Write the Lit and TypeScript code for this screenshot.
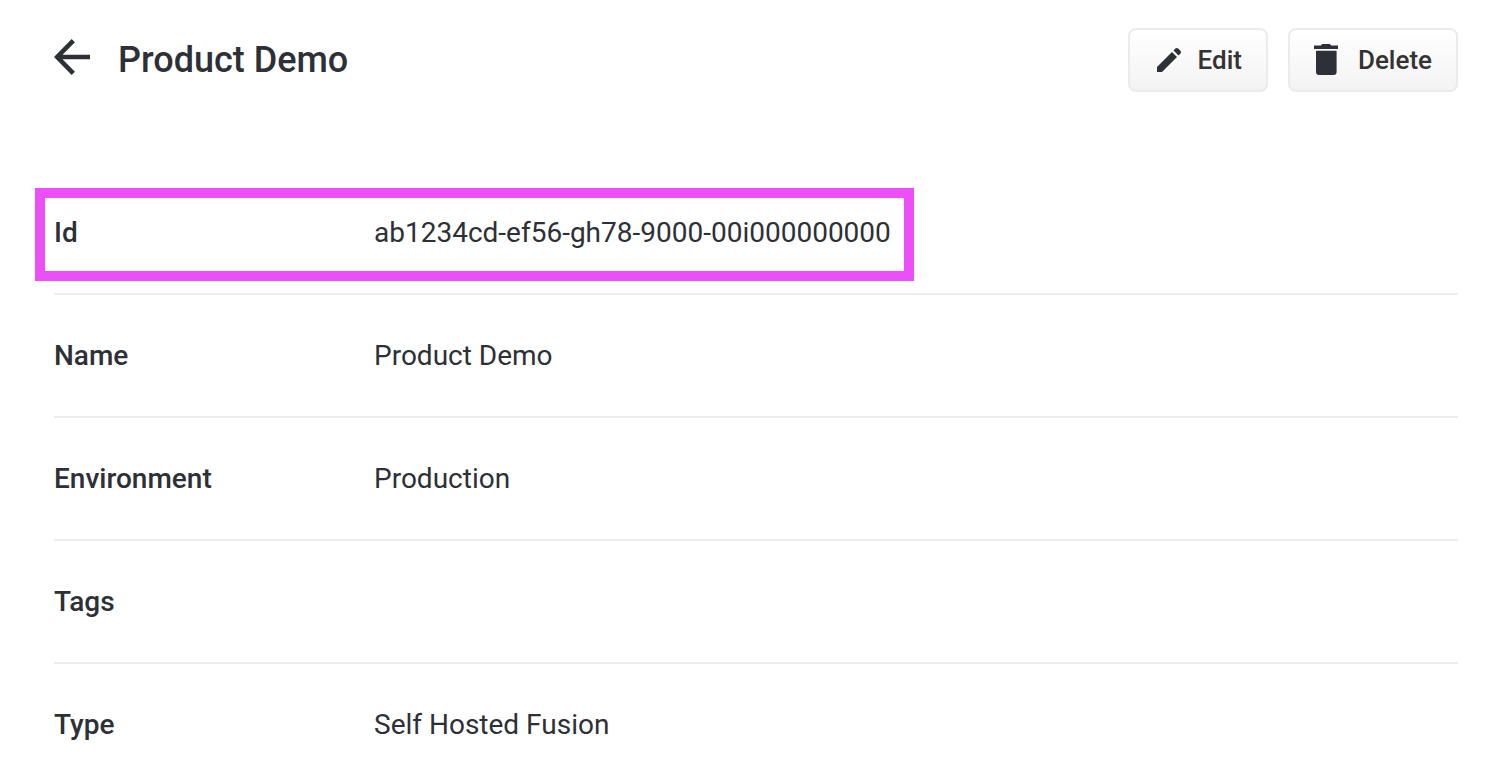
import { LitElement, html, css, svg, nothing } from "lit";
import { customElement } from "lit/decorators.js";

interface Field {
  label: string;
  value: string;
  marked?: boolean;
}

const fields: Field[] = [
  { label: "Id", value: "ab1234cd-ef56-gh78-9000-00i000000000", marked: true },
  { label: "Name", value: "Product Demo" },
  { label: "Environment", value: "Production" },
  { label: "Tags", value: "" },
  { label: "Type", value: "Self Hosted Fusion" },
];

const pencil = svg`
  <path d="M3 23 18 8 23 13 8 28H3Z" />
  <path d="M19.5 6.5 21.4 4.6a2 2 0 0 1 2.8 0L26.4 6.8a2 2 0 0 1 0 2.8L24.5 11.5Z" />`;

const trash = svg`
  <path d="M0 1.5H6.8L8.3 0H15.7L17.2 1.5H24V5H0Z" />
  <path d="M2 6.7H22.6V27.8a3.2 3.2 0 0 1-3.2 3.2H5.2A3.2 3.2 0 0 1 2 27.8Z" />`;

@customElement("app-root")
export class AppRoot extends LitElement {
  static styles = css`
    :host {
      display: block;
      height: 100vh;
      overflow: hidden;
      background: #fff;
      color: #2d3036;
      font-family: Roboto, "Liberation Sans", sans-serif;
      font-size: 28px;
      line-height: 41px;
    }
    .page {
      padding: 28px 44px 0 54px;
    }
    .header {
      display: flex;
      align-items: center;
      gap: 28px;
      margin-bottom: 80px;
    }
    .back {
      display: flex;
      padding: 0 0 6px;
      border: 0;
      background: none;
      color: inherit;
    }
    .title {
      flex: 1;
      margin: 0;
      font-size: 36px;
      font-weight: 500;
      line-height: 44px;
    }
    .actions {
      display: flex;
      gap: 20px;
    }
    .action {
      display: flex;
      align-items: center;
      gap: 16px;
      height: 64px;
      padding: 0 24px;
      border: 2px solid #ebebeb;
      border-radius: 8px;
      background: linear-gradient(#fff, #f3f3f3);
      color: #333;
      font: 500 26px/32px Roboto, "Liberation Sans", sans-serif;
    }
    .icon {
      display: block;
      fill: #2d3036;
    }
    .fields {
      margin: 0;
    }
    .row {
      display: flex;
      padding: 40px 0;
      border-bottom: 2px solid #ededed;
    }
    .pair {
      position: relative;
      display: grid;
      grid-template-columns: 320px auto;
    }
    .label {
      font-weight: 500;
    }
    .value {
      margin: 0;
    }
    .marker {
      position: absolute;
      inset: -24px -23px -28px -19px;
      border: 10px solid #ec4ff8;
      pointer-events: none;
    }
  `;

  render() {
    return html`
      <main class="page">
        <header class="header">
          <button class="back" aria-label="Back">
            <svg width="36" height="36" viewBox="0 0 36 36" fill="none" stroke="currentColor" stroke-width="4.6">
              <path d="M19.3 1.7 3.2 18 19.3 34.3M3.2 18H36" />
            </svg>
          </button>
          <h1 class="title">Product Demo</h1>
          <div class="actions">
            <button class="action">
              <svg class="icon" width="28" height="32" viewBox="0 0 28 32">${pencil}</svg>
              Edit
            </button>
            <button class="action">
              <svg class="icon" width="28" height="32" viewBox="0 0 28 32">${trash}</svg>
              Delete
            </button>
          </div>
        </header>
        <dl class="fields">
          ${fields.map(
            (f) => html`
              <div class="row">
                <div class="pair">
                  <dt class="label">${f.label}</dt>
                  <dd class="value">
                    ${f.value}${f.marked ? html`<span class="marker"></span>` : nothing}
                  </dd>
                </div>
              </div>
            `
          )}
        </dl>
      </main>
    `;
  }
}
